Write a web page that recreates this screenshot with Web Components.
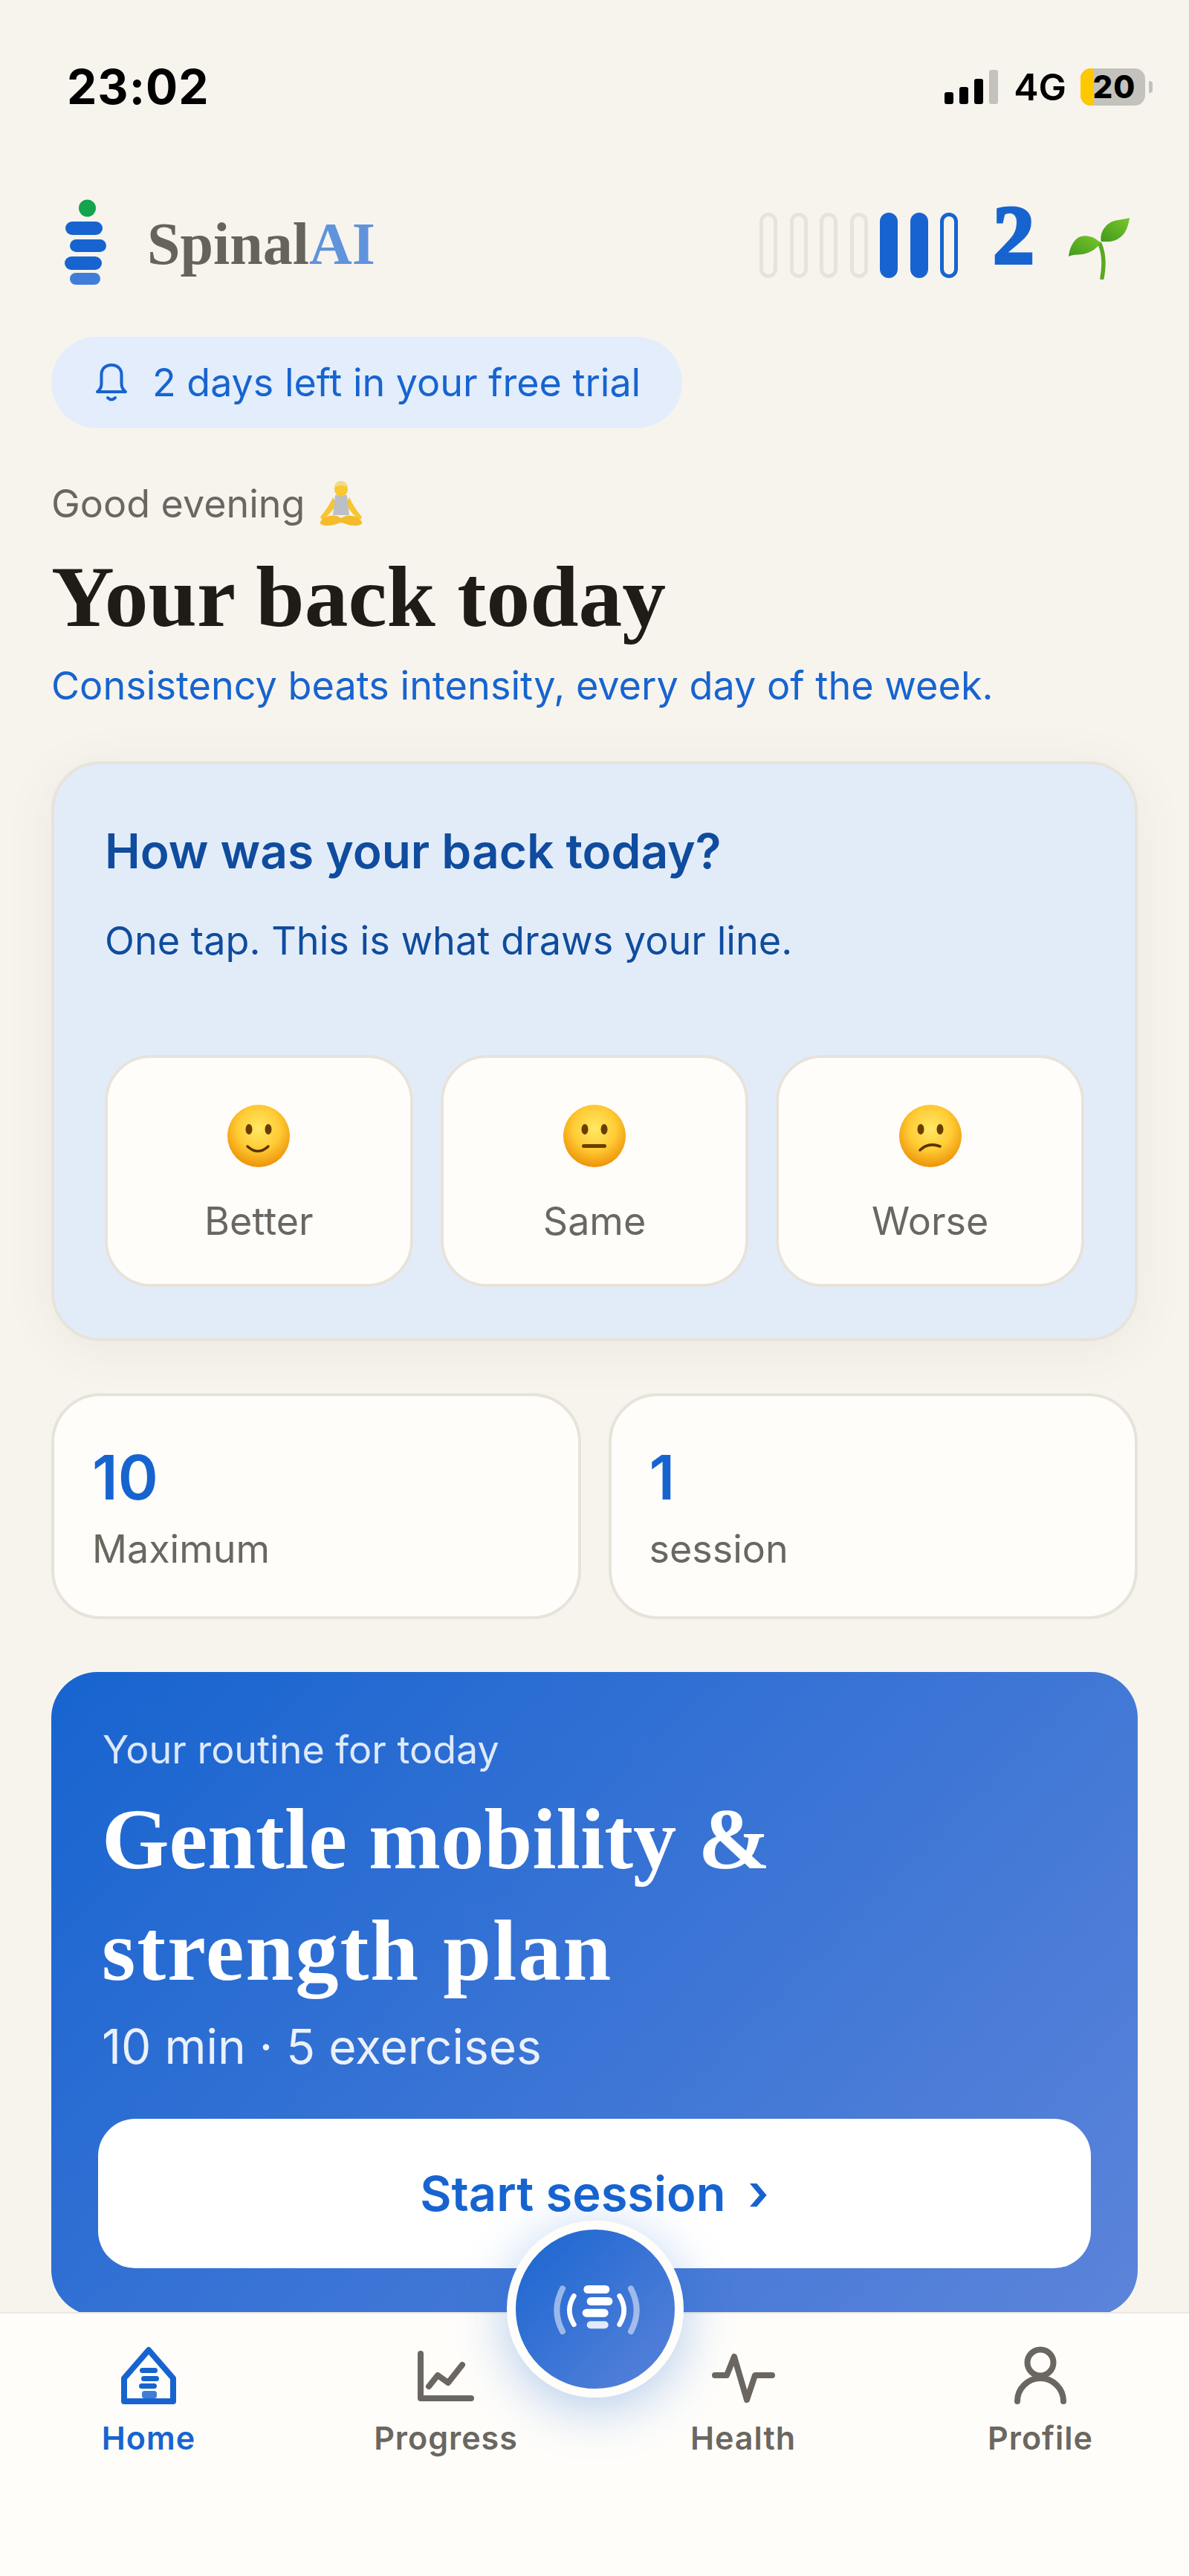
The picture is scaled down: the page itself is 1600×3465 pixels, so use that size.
<!DOCTYPE html>
<html lang="en">
<head>
<meta charset="utf-8">
<title>SpinalAI</title>
<style>
  html, body { margin: 0; height: 3465px; overflow: hidden; }
  body {
    position: relative;
    display: flex;
    flex-direction: column;
    background: #f7f4ee;
    font-family: Inter, "Liberation Sans", sans-serif;
    color: #1f1b16;
  }
  main {
    flex: 1;
    min-height: 0;
    overflow: hidden;
    padding: 0 69px;
    display: flex;
    flex-direction: column;
  }
</style>
</head>
<body>
  <status-bar></status-bar>
  <main>
    <app-header></app-header>
    <trial-pill>2 days left in your free trial</trial-pill>
    <greeting-block></greeting-block>
    <mood-card></mood-card>
    <div style="display:flex;gap:37px;margin-top:70px">
      <stat-card value="10" label="Maximum"></stat-card>
      <stat-card value="1" label="session"></stat-card>
    </div>
    <routine-card></routine-card>
  </main>
  <tab-bar></tab-bar>
  <voice-fab></voice-fab>

<script>
// Base class: markup comes from render(), always in an open shadow root
class ShadowEl extends HTMLElement {
  connectedCallback() {
    if (this.shadowRoot) return;
    this.attachShadow({ mode: "open" });
    this.shadowRoot.innerHTML = this.render();
  }
}

class StatusBar extends ShadowEl {
  render() {
    return `
      <style>
        :host { display: flex; flex: none; height: 234px; align-items: center; justify-content: space-between; padding: 0 49px 0 90px; color: #000; }
        .time { font: 700 64px/1 Inter, sans-serif; letter-spacing: 1px; }
        .right { display: flex; align-items: center; }
        .bars { display: flex; align-items: flex-end; gap: 8px; height: 46px; }
        .bars i { display: block; width: 12px; border-radius: 3px; background: #000; }
        .net { font: 600 50px/1 Inter, sans-serif; margin: 0 19px 0 21px; }
        .batt { position: relative; width: 87px; height: 50px; border-radius: 14px; overflow: hidden; background: #c4c2bd; display: flex; align-items: center; justify-content: center; font: 800 42px/1 Inter, sans-serif; padding-left: 4px; box-sizing: border-box; }
        .batt::before { content: ""; position: absolute; left: 0; top: 0; bottom: 0; width: 17px; background: #fdc800; }
        .batt span { position: relative; letter-spacing: 1px; }
        .nub { width: 5px; height: 16px; margin-left: 5px; border-radius: 0 4px 4px 0; background: #c4c2bd; }
      </style>
      <span class="time">23:02</span>
      <div class="right">
        <div class="bars">
          <i style="height:16px"></i><i style="height:23px"></i><i style="height:34px"></i><i style="height:46px;background:#c4c2bd"></i>
        </div>
        <span class="net">4G</span>
        <div class="batt"><span>20</span></div>
        <div class="nub"></div>
      </div>`;
  }
}

class AppHeader extends ShadowEl {
  render() {
    return `
      <style>
        :host { display: flex; flex: none; height: 182px; align-items: flex-start; justify-content: space-between; }
        .brand { display: flex; align-items: flex-start; margin-top: 34px; }
        .word { font: 700 80px/1 "Liberation Serif", serif; color: #66625c; margin: 20px 0 0 55px; }
        .word b { color: #5f93dc; }
        .streak { display: flex; align-items: flex-start; margin-right: 10px; }
        .pill { width: 24px; height: 88px; box-sizing: border-box; border-radius: 12px; border: 5px solid #e8e3da; margin-top: 52px; margin-right: 16.5px; }
        .pill.on { background: #1764d0; border-color: #1764d0; }
        .pill.now { border-color: #1764d0; }
        .count { font: 700 112px/1 "Liberation Serif", serif; color: #1764d0; -webkit-text-stroke: 4px #1764d0; width: 60px; height: 112px; margin: 26px 0 0 47px; }
        svg { display: block; }
      </style>
      <div class="brand">
        <svg width="56" height="116" viewBox="0 0 56 116" style="margin-left:18px">
          <circle cx="30.5" cy="12" r="11.5" fill="#14a44d"/>
          <rect x="1" y="30" width="50" height="18" rx="9" fill="#1764d0"/>
          <rect x="7" y="54" width="49" height="17" rx="8.5" fill="#1764d0"/>
          <rect x="0" y="77" width="50" height="18" rx="9" fill="#1764d0"/>
          <rect x="7" y="99" width="41" height="16" rx="8" fill="#3f7ed8"/>
        </svg>
        <div class="word">Spinal<b>AI</b></div>
      </div>
      <div class="streak">
        <i class="pill"></i><i class="pill"></i><i class="pill"></i><i class="pill"></i>
        <i class="pill on"></i><i class="pill on"></i><i class="pill now" style="margin-right:0"></i>
        <div class="count">2</div>
        <svg width="84" height="84" viewBox="0 0 84 84" style="margin:58px 0 0 41px">
          <defs>
            <linearGradient id="leaf" x1="0" y1="1" x2="1" y2="0"><stop offset="0" stop-color="#3f9a1c"/><stop offset="1" stop-color="#7cc62c"/></linearGradient>
          </defs>
          <path d="M46 82C49 66 49 50 43 36" fill="none" stroke="#5aa91f" stroke-width="5.5" stroke-linecap="round"/>
          <path d="M44 35C36 25 20 22 12 29C6 34 2 43 1 53C10 49 17 52 27 48C35 45 40 40 44 35Z" fill="url(#leaf)"/>
          <path d="M45 33C42 22 50 10 60 6C68 3 76 3 83 1C81 13 78 23 68 29C60 34 52 33 45 33Z" fill="url(#leaf)"/>
        </svg>
      </div>`;
  }
}

class TrialPill extends ShadowEl {
  render() {
    return `
      <style>
        :host { display: flex; flex: none; align-self: flex-start; align-items: center; height: 123px; margin-top: 37px; padding: 0 56px 0 59px; border-radius: 62px; background: #e3edfb; color: #1764d0; font: 400 52px/1 Inter, sans-serif; }
        svg { display: block; margin-right: 33px; flex: none; }
      </style>
      <svg width="44" height="54" viewBox="0 0 44 54" fill="none" stroke="#1764d0" stroke-width="4" stroke-linecap="round" stroke-linejoin="round">
        <path d="M3 39H41C37 36 35.5 33 35.5 28V16C35.5 8 30 3 22 3S8.500 8 8.500 16V28C8.500 33 7 36 3 39Z"/>
        <path d="M17 47Q22 52 27 47"/>
      </svg>
      <span><slot></slot></span>`;
  }
}

class GreetingBlock extends ShadowEl {
  render() {
    return `
      <style>
        :host { display: block; flex: none; margin-top: 64px; }
        .hi { display: flex; align-items: center; height: 76px; font: 400 52px/1 Inter, sans-serif; color: #6b6760; }
        .hi svg { margin-left: 17px; display: block; }
        h1 { margin: 21px 0 0; font: 700 117.5px/130px "Liberation Serif", serif; color: #1f1b16; }
        p { margin: 20px 0 0; font: 400 52.2px/70px Inter, sans-serif; color: #1764d0; }
      </style>
      <div class="hi">Good evening
        <svg width="64" height="62" viewBox="0 0 64 62">
          <path d="M21 22C17 31 11 40 5 47C3 50 6 53 9 51C15 46 21 39 26 31ZM43 22C47 31 53 40 59 47C61 50 58 53 55 51C49 46 43 39 38 31Z" fill="#f7c531"/>
          <path d="M24 19H40L43 46H21Z" fill="#bcc0c4"/>
          <path d="M4 55C10 46 24 44 32 50C40 44 54 46 60 55C62 60 50 61 42 59C38 58 34 56 32 56C30 56 26 58 22 59C14 61 2 60 4 55Z" fill="#f5bb28"/>
          <ellipse cx="32" cy="11" rx="9" ry="10" fill="#f9c933"/>
          <path d="M23 9C23 2 28 0 32 0S41 2 41 9C37 5 28 5 23 9Z" fill="#f0dc88"/>
        </svg>
      </div>
      <h1>Your back today</h1>
      <p>Consistency beats intensity, every day of the week.</p>`;
  }
}

class MoodFace extends ShadowEl {
  render() {
    const kind = this.getAttribute("kind");
    const mouths = {
      better: `<path d="M28 57Q42 70 56 57" fill="none" stroke="#5a3200" stroke-width="3.500" stroke-linecap="round"/>`,
      same: `<rect x="26" y="54" width="33" height="5" rx="2.500" fill="#6b3c00"/>`,
      worse: `<path d="M29 62Q40 51 56 57" fill="none" stroke="#5a3200" stroke-width="3.500" stroke-linecap="round"/>`,
    };
    return `
      <style>:host { display: block; width: 86px; height: 86px; } svg { display: block; }</style>
      <svg width="86" height="86" viewBox="0 0 86 86">
        <defs>
          <radialGradient id="face" cx="50%" cy="38%" r="62%">
            <stop offset="0" stop-color="#ffe866"/><stop offset=".55" stop-color="#ffcc35"/><stop offset="1" stop-color="#ee9208"/>
          </radialGradient>
        </defs>
        <circle cx="43" cy="43" r="42" fill="url(#face)"/>
        <ellipse cx="30" cy="34" rx="4.500" ry="7" fill="#6b3c00"/>
        <ellipse cx="56" cy="34" rx="4.500" ry="7" fill="#6b3c00"/>
        ${mouths[kind]}
      </svg>`;
  }
}

class MoodButton extends ShadowEl {
  render() {
    return `
      <style>
        :host { display: flex; flex: 1; flex-direction: column; align-items: center; box-sizing: border-box; height: 312px; padding-top: 62px; border: 4px solid #e8e3da; border-radius: 62px; background: #fefdfa; color: #6b6760; font: 400 52px/1 Inter, sans-serif; }
        span { margin-top: 46px; }
      </style>
      <mood-face kind="${this.getAttribute("kind")}"></mood-face>
      <span><slot></slot></span>`;
  }
}

class MoodCard extends ShadowEl {
  render() {
    return `
      <style>
        :host { display: block; flex: none; box-sizing: border-box; height: 780px; margin-top: 67px; padding: 72px 68px 0 68px; border: 4px solid #e8e3da; border-radius: 66px; background: #e2ecf9; box-shadow: 0 10px 70px rgba(90,80,60,.07); color: #0f4c9e; }
        h2 { margin: 0; font: 600 64px/90px Inter, sans-serif; }
        p { margin: 40px 0 0; font: 400 52.2px/70px Inter, sans-serif; }
        .row { display: flex; gap: 37px; margin-top: 119px; }
      </style>
      <h2>How was your back today?</h2>
      <p>One tap. This is what draws your line.</p>
      <div class="row">
        <mood-button kind="better">Better</mood-button>
        <mood-button kind="same">Same</mood-button>
        <mood-button kind="worse">Worse</mood-button>
      </div>`;
  }
}

class StatCard extends ShadowEl {
  render() {
    return `
      <style>
        :host { display: block; flex: 1; box-sizing: border-box; height: 304px; padding: 69px 0 0 51px; border: 4px solid #e8e3da; border-radius: 66px; background: #fefdfa; }
        b { display: block; font: 600 82px/1 Inter, sans-serif; color: #1764d0; }
        span { display: block; margin-top: 20px; font: 400 52px/70px Inter, sans-serif; color: #6b6760; }
      </style>
      <b>${this.getAttribute("value")}</b>
      <span>${this.getAttribute("label")}</span>`;
  }
}

class RoutineCard extends ShadowEl {
  render() {
    return `
      <style>
        :host { display: block; flex: none; box-sizing: border-box; height: 866px; margin-top: 71px; padding: 70px 63px 0 69px; border-radius: 62px; background: linear-gradient(135deg, #1764d0 0%, #5c84da 100%); color: #fff; }
        .eyebrow { font: 400 52px/70px Inter, sans-serif; color: rgba(255,255,255,.85); }
        h2 { margin: 10px 0 0 -1px; font: 700 116.5px/150px "Liberation Serif", serif; }
        h2 span { letter-spacing: 2px; }
        .meta { margin: 14px 0 0 -1px; font: 400 64px/80px Inter, sans-serif; color: rgba(255,255,255,.9); }
        .start { display: flex; align-items: center; justify-content: center; gap: 30px; height: 201px; margin: 57px 0 0 -6px; border-radius: 50px; background: #fff; color: #1764d0; font: 600 65px/1 Inter, sans-serif; }
        .start i { font-style: normal; font-size: 68px; margin-top: -6px; }
      </style>
      <div class="eyebrow">Your routine for today</div>
      <h2>Gentle mobility &amp;<br><span>strength plan</span></h2>
      <div class="meta">10 min · 5 exercises</div>
      <div class="start"><span>Start session</span><i>›</i></div>`;
  }
}

class TabItem extends ShadowEl {
  render() {
    const on = this.hasAttribute("active");
    return `
      <style>
        :host { display: flex; flex-direction: column; align-items: center; color: ${on ? "#1764d0" : "#6b6760"}; font: 600 43px/1 Inter, sans-serif; letter-spacing: 1px; }
        .ic { height: 102px; display: flex; align-items: flex-start; }
        ::slotted(svg) { display: block; }
      </style>
      <div class="ic"><slot></slot></div>
      <span>${this.getAttribute("label")}</span>`;
  }
}

class TabBar extends ShadowEl {
  render() {
    return `
      <style>
        :host { display: grid; flex: none; grid-template-columns: repeat(4, 1fr); box-sizing: border-box; height: 355px; padding-top: 44px; border-top: 2px solid #ece8e0; background: #fefdfa; }
      </style>
      <tab-item label="Home" active>
        <svg width="76" height="78" viewBox="0 0 76 78" fill="none">
          <path d="M38 5L71 43V74H5V43Z" stroke="#1764d0" stroke-width="8" stroke-linejoin="round"/>
          <rect x="26" y="29" width="24" height="7" rx="3.500" fill="#1764d0"/>
          <rect x="28" y="40" width="24" height="7" rx="3.500" fill="#1764d0"/>
          <rect x="25" y="50" width="24" height="7" rx="3.500" fill="#1764d0"/>
          <rect x="29" y="60" width="20" height="10" rx="3.500" fill="#3f7ed8"/>
        </svg>
      </tab-item>
      <tab-item label="Progress">
        <svg width="76" height="72" viewBox="0 0 76 68" fill="none" stroke="#6b6760" stroke-width="8" stroke-linecap="round" stroke-linejoin="round" style="margin-top:4px">
          <path d="M4 4V64H72"/>
          <path d="M15 48L27 33L41 43L60 19"/>
        </svg>
      </tab-item>
      <tab-item label="Health">
        <svg width="85" height="72" viewBox="0 0 85 68" fill="none" stroke="#6b6760" stroke-width="8" stroke-linecap="round" stroke-linejoin="round" style="margin-top:8px">
          <path d="M4 29H20L30 4L47 62L58 29H81"/>
        </svg>
      </tab-item>
      <tab-item label="Profile">
        <svg width="70" height="78" viewBox="0 0 70 78" fill="none" stroke="#6b6760" stroke-width="8" stroke-linecap="round">
          <circle cx="35" cy="22" r="17.500"/>
          <path d="M4 74A31 31 0 0 1 66 74"/>
        </svg>
      </tab-item>`;
  }
}

class VoiceFab extends ShadowEl {
  render() {
    // sits over the card and the tab bar, so this one is positioned
    return `
      <style>
        :host { position: absolute; left: 682px; top: 2987px; display: flex; align-items: center; justify-content: center; box-sizing: border-box; width: 238px; height: 238px; border: 12.500px solid #fefdfa; border-radius: 50%; background: linear-gradient(135deg, #1764d0 0%, #5c84da 100%); background-origin: border-box; box-shadow: 0 14px 70px rgba(23,100,208,.32); }
        svg { display: block; }
      </style>
      <svg width="120" height="120" viewBox="302 258 360 360" fill="none" stroke-linecap="round">
        <rect x="435" y="342" width="105" height="33" rx="16.500" fill="#fff"/>
        <rect x="448" y="390" width="104" height="33" rx="16.500" fill="#fff"/>
        <rect x="430" y="437" width="105" height="33" rx="16.500" fill="#fff"/>
        <rect x="448" y="487" width="87" height="30" rx="15" fill="#fff" fill-opacity=".85"/>
        <path d="M396 385Q360 443 396 500" stroke="#fff" stroke-width="20"/>
        <path d="M350 355Q304 443 350 528" stroke="#fff" stroke-opacity=".5" stroke-width="24"/>
        <path d="M580 385Q616 443 580 500" stroke="#fff" stroke-width="20"/>
        <path d="M626 355Q672 443 626 528" stroke="#fff" stroke-opacity=".5" stroke-width="24"/>
      </svg>`;
  }
}

customElements.define("status-bar", StatusBar);
customElements.define("app-header", AppHeader);
customElements.define("trial-pill", TrialPill);
customElements.define("greeting-block", GreetingBlock);
customElements.define("mood-face", MoodFace);
customElements.define("mood-button", MoodButton);
customElements.define("mood-card", MoodCard);
customElements.define("stat-card", StatCard);
customElements.define("routine-card", RoutineCard);
customElements.define("tab-item", TabItem);
customElements.define("tab-bar", TabBar);
customElements.define("voice-fab", VoiceFab);
</script>
</body>
</html>
